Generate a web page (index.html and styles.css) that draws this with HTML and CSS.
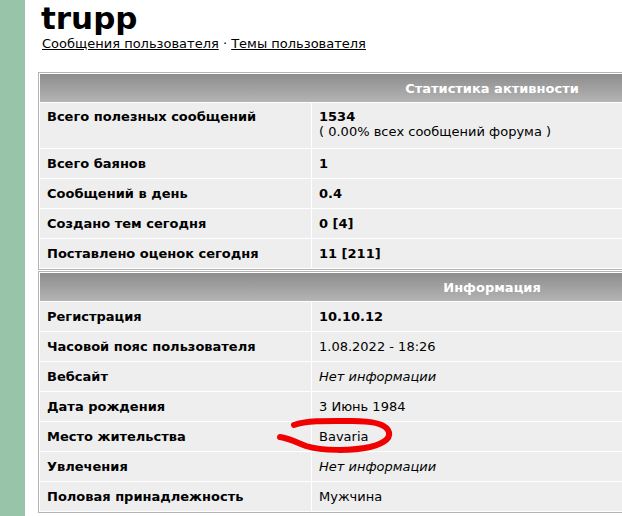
FILE: index.html
```html
<!DOCTYPE html>
<html lang="ru">
<head>
    <meta charset="UTF-8">
    <meta name="viewport" content="width=device-width, initial-scale=1.0">
    <title>trupp</title>
    <link rel="stylesheet" href="styles.css">
</head>
<body>
    <div class="page">
        <div class="sidebar"></div>
        <div class="main">
            <h1 class="username">trupp</h1>
            <div class="userlinks">
                <a href="#">Сообщения пользователя</a> &middot; <a href="#">Темы пользователя</a>
            </div>

            <table class="profile">
                <tr><th colspan="2">Статистика активности</th></tr>
                <tr class="tall">
                    <td class="label">Всего полезных сообщений</td>
                    <td><b>1534</b><br>( 0.00% всех сообщений форума )</td>
                </tr>
                <tr><td class="label">Всего баянов</td><td><b>1</b></td></tr>
                <tr><td class="label">Сообщений в день</td><td><b>0.4</b></td></tr>
                <tr><td class="label">Создано тем сегодня</td><td><b>0 [4]</b></td></tr>
                <tr><td class="label">Поставлено оценок сегодня</td><td><b>11 [211]</b></td></tr>
            </table>

            <table class="profile">
                <tr><th colspan="2">Информация</th></tr>
                <tr><td class="label">Регистрация</td><td><b>10.10.12</b></td></tr>
                <tr><td class="label">Часовой пояс пользователя</td><td>1.08.2022 - 18:26</td></tr>
                <tr><td class="label">Вебсайт</td><td><i>Нет информации</i></td></tr>
                <tr><td class="label">Дата рождения</td><td>3 Июнь 1984</td></tr>
                <tr>
                    <td class="label">Место жительства</td>
                    <td class="marked">Bavaria
                        <!-- red marker scribble around the city -->
                        <svg class="scribble" width="130" height="44" viewBox="0 0 130 44">
                            <path d="M8 21 C 16 22, 24 26, 34 30 C 50 35, 80 35, 98 31 C 114 27, 120 21, 116 14 C 112 7, 98 5, 80 5 C 60 5, 36 4, 22 9"
                                  fill="none" stroke="#f00000" stroke-width="6" stroke-linecap="round" stroke-linejoin="round"/>
                        </svg>
                    </td>
                </tr>
                <tr><td class="label">Увлечения</td><td><i>Нет информации</i></td></tr>
                <tr><td class="label">Половая принадлежность</td><td>Мужчина</td></tr>
            </table>
        </div>
    </div>
</body>
</html>
```

FILE: styles.css
```css
html, body{
    margin: 0;
    padding: 0;
    background: #fff;
    overflow: hidden;
}
body{
    font-family: Verdana, "DejaVu Sans", sans-serif;
    font-size: 13px;
    color: #000;
}
.page{
    display: flex;
    min-height: 516px;
}
.sidebar{
    width: 25px;
    flex-shrink: 0;
    background-color: #98c4a9;
}
.main{
    padding-left: 13px;
}
.username{
    margin: 0;
    padding-left: 3px;
    font-size: 31px;
    line-height: 36px;
    font-weight: bold;
}
.userlinks{
    padding-left: 4px;
    margin-bottom: 21px;
}
.userlinks a{
    color: #000;
}

.profile{
    width: 908px;
    border: 1px solid #b4b4b4;
    border-spacing: 1px;
    background: #fff;
    margin-bottom: 1px;
}
.profile th{
    height: 28px;
    padding: 0;
    color: #fff;
    font-weight: bold;
    text-align: center;
    background: linear-gradient(to bottom, #8d8d8d, #b4b4b4);
}
.profile td{
    height: 29px;
    padding: 0 7px;
    background-color: #eeeeee;
    vertical-align: middle;
    box-sizing: border-box;
}
.profile td.label{
    width: 271px;
    font-weight: bold;
}
.profile tr.tall td{
    height: 45px;
    vertical-align: top;
    padding-top: 6px;
}
.marked{
    position: relative;
}
.scribble{
    position: absolute;
    left: -40px;
    top: -6px;
}
```
